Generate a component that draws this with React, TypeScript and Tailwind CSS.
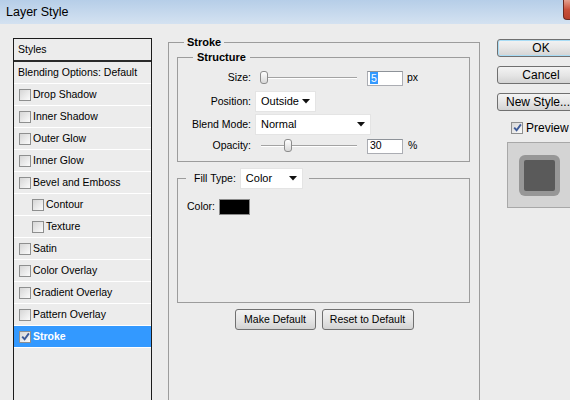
import React from "react"

const styleItems = [
  { label: "Drop Shadow" },
  { label: "Inner Shadow" },
  { label: "Outer Glow" },
  { label: "Inner Glow" },
  { label: "Bevel and Emboss" },
  { label: "Contour", indent: true },
  { label: "Texture", indent: true },
  { label: "Satin" },
  { label: "Color Overlay" },
  { label: "Gradient Overlay" },
  { label: "Pattern Overlay" },
  { label: "Stroke", active: true },
]

function Check({ checked }: { checked?: boolean }) {
  return (
    <span className="flex h-[12px] w-[12px] shrink-0 items-center justify-center border border-[#8e8f8f] bg-linear-to-br from-[#d6d6d6] to-[#fbfbfb]">
      {checked && (
        <svg width="9" height="9" viewBox="0 0 9 9">
          <path d="M1.2 4.6 L3.6 7.2 L7.9 1.4" fill="none" stroke="#3d5a98" strokeWidth="1.9" />
        </svg>
      )}
    </span>
  )
}

function Arrow() {
  return (
    <svg width="8" height="5" viewBox="0 0 8 5">
      <path d="M0 0 H8 L4 4.5 Z" fill="#111" />
    </svg>
  )
}

function Select({ value, className }: { value: string; className: string }) {
  return (
    <div className={`flex h-[21px] shrink-0 items-center justify-between border border-[#e4e4e4] bg-white pl-[5px] pr-[5px] text-[11px] ${className}`}>
      <span>{value}</span>
      <Arrow />
    </div>
  )
}

function Slider({ pos }: { pos: number }) {
  return (
    <div className="relative ml-[8px] h-[16px] w-[98px] shrink-0">
      <div className="absolute left-[2px] right-0 top-[7px] h-[2px] border-t border-b border-t-[#a3a3a3] border-b-white" />
      <div
        className="absolute top-[1px] h-[13px] w-[8px] rounded-[3px] border border-[#8c8c8c] bg-linear-to-b from-white to-[#d8d8d8]"
        style={{ left: pos }}
      />
    </div>
  )
}

function NumField({ value, selected }: { value: string; selected?: boolean }) {
  return (
    <div className="ml-[10px] flex h-[15px] w-[36px] shrink-0 items-center border border-[#abadb3] border-t-[#8e9399] bg-white pl-[2px]">
      {selected ? (
        <span className="bg-[#3399ff] px-[1px] leading-[12px] text-white">{value}</span>
      ) : (
        <span>{value}</span>
      )}
    </div>
  )
}

function Button({ children, className }: { children: React.ReactNode; className: string }) {
  return (
    <div className={`flex shrink-0 items-center justify-center rounded-[3px] border border-[#707070] bg-linear-to-b from-[#f3f3f3] via-[#e6e6e6] to-[#d3d3d3] ${className}`}>
      {children}
    </div>
  )
}

export default function App() {
  return (
    <div className="h-[400px] w-[570px] overflow-hidden bg-[#ececec] font-['Liberation_Sans',Arial,sans-serif] text-[10.5px] text-black">
      {/* title bar */}
      <div className="flex h-[24px] items-start bg-linear-to-b from-[#b6cee8] to-[#d4e2f1]">
        <span className="ml-[6px] mt-[5px] text-[12.5px] leading-[15px]">Layer Style</span>
        <div className="ml-auto h-[20px] w-[7px] rounded-bl-[4px] border-b border-l border-[#6b2a22] bg-linear-to-b from-[#e4a08f] via-[#c8503a] to-[#b8402c]" />
      </div>

      <div className="flex items-start">
        {/* styles list */}
        <div className="ml-[13px] mt-[14px] h-[380px] w-[139px] shrink-0 border border-[#1c1c1c]">
          <div className="flex h-[23px] items-center border-b-2 border-[#2a2a2a] pl-[4px]">Styles</div>
          <div className="flex h-[22px] items-center border-b border-white pl-[4px]">Blending Options: Default</div>
          {styleItems.map((item) => (
            <div
              key={item.label}
              className={`flex h-[22px] items-center gap-[2px] border-b border-white ${item.indent ? "pl-[18px]" : "pl-[5px]"} ${item.active ? "bg-[#3399ff] font-bold text-white" : ""}`}
            >
              <Check checked={item.active} />
              <span>{item.label}</span>
            </div>
          ))}
        </div>

        {/* stroke settings */}
        <fieldset className="ml-[16px] mt-[11px] h-[380px] w-[312px] shrink-0 border border-[#9c9c9c]">
          <legend className="ml-[15px] px-[3px] text-[11px] font-bold leading-[14px]">Stroke</legend>

          <fieldset className="ml-[8px] mt-[1px] w-[293px] border border-[#9c9c9c] pb-[7px]">
            <legend className="ml-[15px] px-[4px] text-[11px] font-bold leading-[14px]">Structure</legend>

            <div className="mt-[6px] flex h-[16px] items-center">
              <span className="w-[73px] shrink-0 text-right">Size:</span>
              <Slider pos={1} />
              <NumField value="5" selected />
              <span className="ml-[4px]">px</span>
            </div>

            <div className="mt-[5px] flex h-[21px] items-center">
              <span className="w-[73px] shrink-0 text-right">Position:</span>
              <Select value="Outside" className="ml-[4px] w-[61px]" />
            </div>

            <div className="mt-[2px] flex h-[21px] items-center">
              <span className="w-[73px] shrink-0 text-right">Blend Mode:</span>
              <Select value="Normal" className="ml-[4px] w-[116px] pr-[5px]" />
            </div>

            <div className="mt-[3px] flex h-[16px] items-center">
              <span className="w-[73px] shrink-0 text-right">Opacity:</span>
              <Slider pos={25} />
              <NumField value="30" />
              <span className="ml-[5px]">%</span>
            </div>
          </fieldset>

          <fieldset className="ml-[8px] mt-[6px] h-[135px] w-[293px] border border-[#9c9c9c]">
            <legend className="ml-[8px] pl-[8px] pr-[6px]">
              <div className="flex h-[21px] items-center">
                <span>Fill Type:</span>
                <Select value="Color" className="ml-[4px] w-[63px]" />
              </div>
            </legend>
            <div className="mt-[10px] flex h-[16px] items-center pl-[9px]">
              <span>Color:</span>
              <div className="ml-[4px] h-[16px] w-[31px] border border-[#8a8a8a] bg-black" />
            </div>
          </fieldset>

          <div className="mt-[6px] flex justify-center gap-[6px]">
            <Button className="h-[21px] w-[81px]">Make Default</Button>
            <Button className="h-[21px] w-[92px]">Reset to Default</Button>
          </div>
        </fieldset>

        {/* dialog buttons */}
        <div className="ml-[17px] mt-[15px] flex shrink-0 flex-col text-[12px]">
          <Button className="h-[18px] w-[88px] border-[#3c7fb1] shadow-[inset_0_0_0_1px_#a8dcf5]">OK</Button>
          <Button className="mt-[9px] h-[18px] w-[88px]">Cancel</Button>
          <Button className="mt-[9px] h-[18px] w-[88px] justify-start pl-[8px]">New Style...</Button>
          <div className="ml-[14px] mt-[10px] flex h-[13px] items-center gap-[3px]">
            <Check checked />
            <span>Preview</span>
          </div>
          <div className="ml-[10px] mt-[8px] h-[66px] w-[80px] border border-[#a8a8a8] bg-[#d4d4d4] pl-[11px] pt-[12px]">
            <div className="flex h-[41px] w-[41px] items-center justify-center rounded-[6px] bg-[#979797]">
              <div className="h-[31px] w-[31px] rounded-[2px] bg-[#5a5a5a]" />
            </div>
          </div>
        </div>
      </div>
    </div>
  )
}
